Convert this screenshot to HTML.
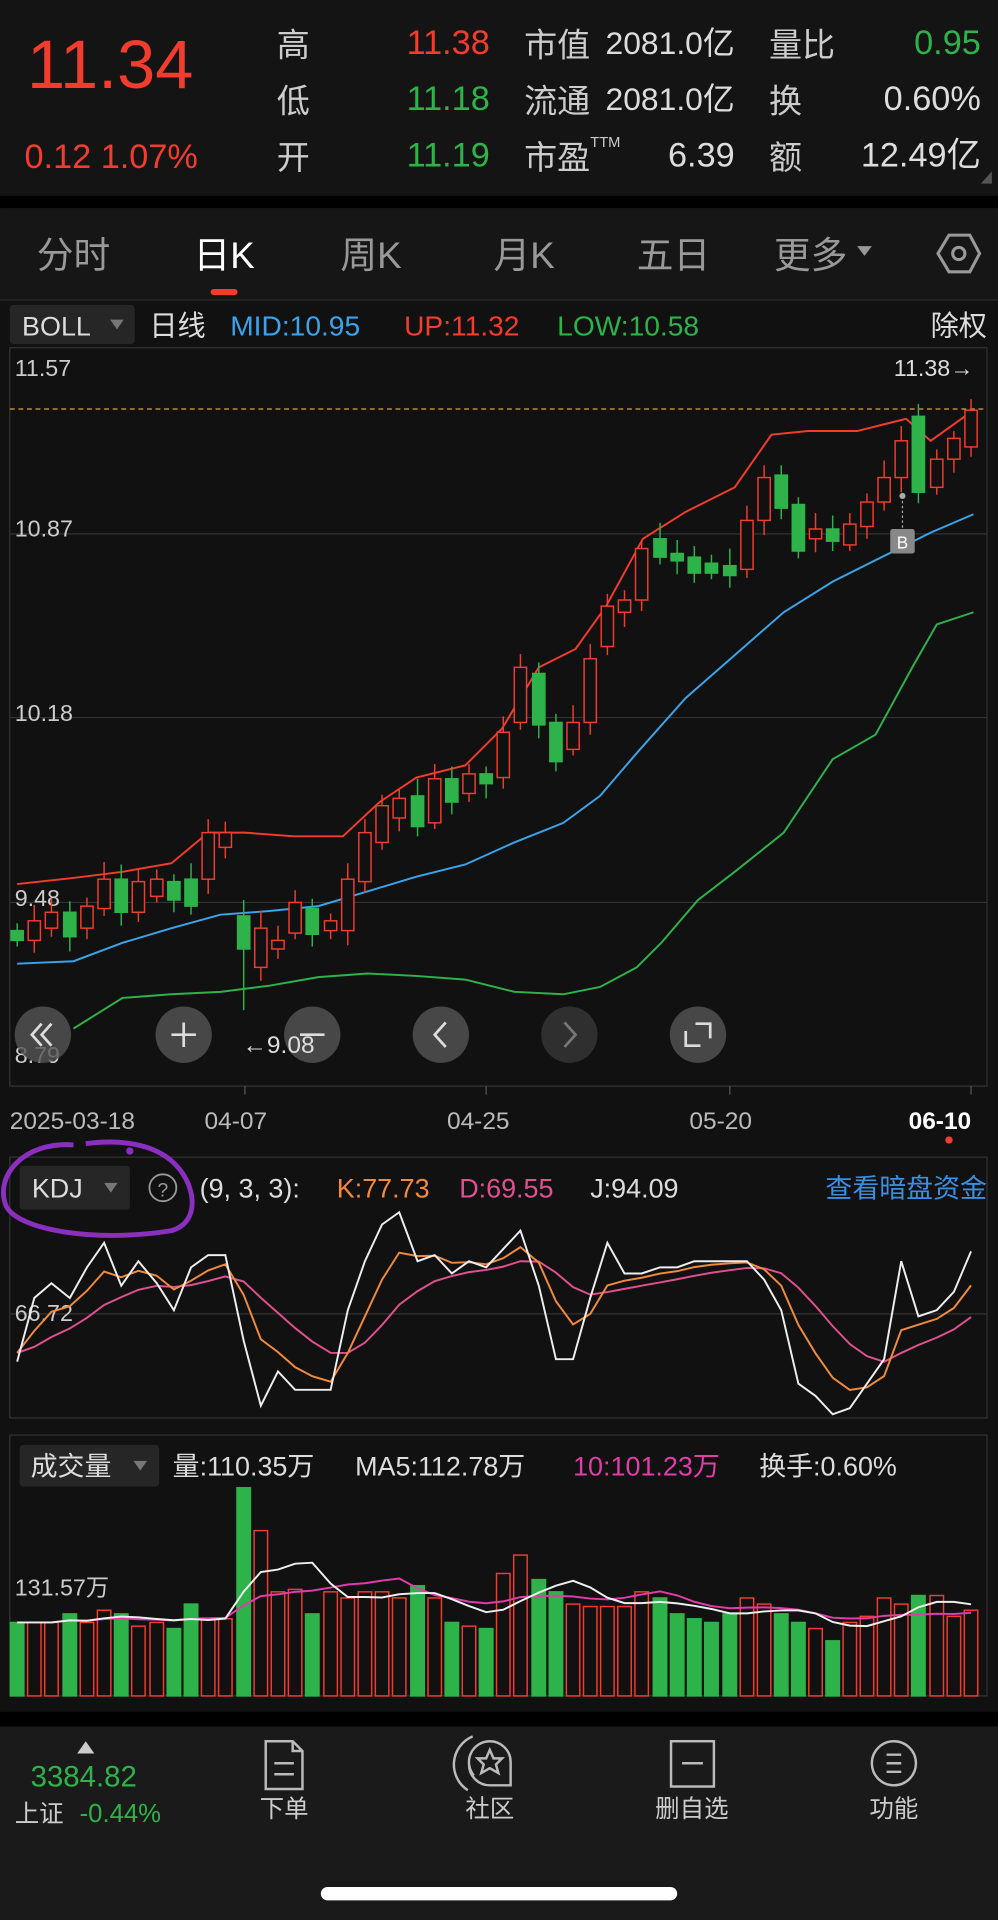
<!DOCTYPE html>
<html><head><meta charset="utf-8"><style>
html,body{margin:0;padding:0;background:#111;}
svg{display:block}
text{font-family:"Liberation Sans","Noto Sans CJK SC",sans-serif;}
</style></head><body>
<svg id="s" width="998" height="1920" viewBox="0 0 815 1568" xmlns="http://www.w3.org/2000/svg">
<rect width="815" height="1568" fill="#111"/>
<rect width="815" height="160" fill="#141414"/>
<rect y="160" width="815" height="10" fill="#000"/>
<rect y="170" width="815" height="75" fill="#161616"/>
<line x1="0" y1="245" x2="815" y2="245" stroke="#2a2a2a"/>
<text x="22" y="72" font-size="56" fill="#f23c2e">11.34</text>
<text x="20" y="137" font-size="28" fill="#f23c2e">0.12  1.07%</text>
<g font-size="27" fill="#ccc">
<text x="226" y="46">高</text><text x="226" y="92">低</text><text x="226" y="138">开</text>
<text x="428" y="46">市值</text><text x="428" y="92">流通</text><text x="428" y="138">市盈</text>
<text x="482" y="120" font-size="12">TTM</text>
<text x="628" y="46">量比</text><text x="628" y="92">换</text><text x="628" y="138">额</text>
</g>
<g font-size="28" text-anchor="end">
<text x="400" y="44" fill="#f23c2e">11.38</text><text x="400" y="90" fill="#2eb24a">11.18</text><text x="400" y="136" fill="#2eb24a">11.19</text>
<text x="600" y="44" fill="#ddd" font-size="26">2081.0亿</text><text x="600" y="90" fill="#ddd" font-size="26">2081.0亿</text><text x="600" y="136" fill="#ddd">6.39</text>
<text x="801" y="44" fill="#2eb24a">0.95</text><text x="801" y="90" fill="#ddd">0.60%</text><text x="801" y="136" fill="#ddd">12.49亿</text>
</g>
<path d="M801 150 L810 140 L810 150Z" fill="#555"/>
<g font-size="30" fill="#999">
<text x="30" y="219">分时</text><text x="158" y="219" fill="#fff">日K</text><text x="278" y="219">周K</text>
<text x="403" y="219">月K</text><text x="520" y="219">五日</text><text x="632" y="219">更多</text>
</g>
<path d="M700 201 L712 201 L706 209Z" fill="#999"/>
<path d="M766 207 L775 192 L792 192 L800 207 L792 222 L775 222Z" fill="none" stroke="#999" stroke-width="2.5"/>
<circle cx="783" cy="207" r="5" fill="none" stroke="#999" stroke-width="2.5"/>
<rect x="172" y="236" width="22" height="5" rx="2.5" fill="#f23c2e"/>
<rect x="8" y="249" width="102" height="32" rx="3" fill="#262626"/>
<text x="18" y="274" font-size="22" fill="#ddd">BOLL</text>
<path d="M90 261 L101 261 L95.5 269Z" fill="#777"/>
<g font-size="23">
<text x="122" y="274" fill="#ddd">日线</text>
<text x="188" y="274" fill="#3ba3ea">MID:10.95</text>
<text x="330" y="274" fill="#f23c2e">UP:11.32</text>
<text x="455" y="274" fill="#2eb24a">LOW:10.58</text>
<text x="806" y="274" fill="#ddd" text-anchor="end">除权</text>
</g>
<rect x="8" y="284" width="798" height="603" fill="none" stroke="#333"/>
<g stroke="#333"><line x1="8" y1="436" x2="806" y2="436"/><line x1="8" y1="586" x2="806" y2="586"/><line x1="8" y1="737" x2="806" y2="737"/></g>
<g font-size="19" fill="#ccc"><text x="12" y="307">11.57</text><text x="12" y="438">10.87</text><text x="12" y="589">10.18</text><text x="12" y="740">9.48</text><text x="12" y="868">8.79</text></g>
<line x1="8" y1="334" x2="806" y2="334" stroke="#d9a441" stroke-dasharray="4,3"/>
<text x="795" y="307" font-size="19" fill="#ddd" text-anchor="end">11.38→</text>
<g id="boll" fill="none" stroke-width="1.6">
<polyline stroke="#f23c2e" points="14,722 60,717 100,712 140,705 170,680 200,680 240,683 280,683 310,655 340,635 380,625 410,595 440,545 470,530 495,495 525,440 560,418 600,398 630,355 660,352 700,352 740,342 760,360 795,335"/>
<polyline stroke="#3ba3ea" points="14,787 60,785 100,770 140,758 180,747 220,744 260,740 300,728 340,716 380,706 420,688 460,672 490,650 520,615 560,570 600,535 640,500 680,475 720,455 760,435 795,420"/>
<polyline stroke="#2eb24a" points="60,840 100,815 140,812 180,810 220,805 260,798 300,795 340,797 380,800 420,810 460,812 490,806 520,790 540,770 570,735 600,712 640,680 680,620 715,600 745,545 765,510 795,500"/>
</g>
<g id="candles"></g>
<line x1="737" y1="405" x2="737" y2="432" stroke="#aaa" stroke-dasharray="2,2"/>
<circle cx="737" cy="405" r="2.5" fill="#aaa"/>
<rect x="727" y="432" width="20" height="20" rx="2" fill="#888"/>
<text x="737" y="448" font-size="14" fill="#fff" text-anchor="middle">B</text>
<g fill="rgba(85,85,85,0.8)">
<circle cx="35" cy="845" r="23"/><circle cx="150" cy="845" r="23"/><circle cx="255" cy="845" r="23"/>
<circle cx="360" cy="845" r="23"/><circle cx="465" cy="845" r="23" fill="rgba(60,60,60,0.7)"/><circle cx="570" cy="845" r="23"/>
</g>
<g stroke="#ddd" stroke-width="2.2" fill="none">
<path d="M34 836 L26 845 L34 854 M42 836 L34 845 L42 854"/>
<path d="M140 845 H160 M150 835 V855"/>
<path d="M245 845 H265"/>
<path d="M364 835 L355 845 L364 855"/>
<path d="M461 835 L470 845 L461 855" stroke="#777"/>
<path d="M560 842 V854 H572 M580 848 V836 H568"/>
</g>
<text x="198" y="860" font-size="20" fill="#ddd">←9.08</text>
<g stroke="#555"><line x1="200" y1="887" x2="200" y2="894"/><line x1="397" y1="887" x2="397" y2="894"/><line x1="596" y1="887" x2="596" y2="894"/><line x1="793" y1="887" x2="793" y2="894"/></g>
<g font-size="20" fill="#bbb"><text x="8" y="922">2025-03-18</text><text x="167" y="922">04-07</text><text x="365" y="922">04-25</text><text x="563" y="922">05-20</text><text x="742" y="922" fill="#fff" font-weight="bold">06-10</text></g>
<circle cx="775" cy="931" r="3" fill="#f23c2e"/>
<rect x="8" y="945" width="798" height="213" fill="none" stroke="#333"/>
<line x1="8" y1="1073" x2="806" y2="1073" stroke="#333"/>
<rect x="16" y="952" width="90" height="36" rx="3" fill="#262626"/>
<text x="26" y="978" font-size="22" fill="#ddd">KDJ</text>
<path d="M85 966 L96 966 L90.5 974Z" fill="#777"/>
<circle cx="133" cy="970" r="11" fill="none" stroke="#999" stroke-width="1.5"/>
<text x="133" y="977" font-size="16" fill="#999" text-anchor="middle">?</text>
<g font-size="22"><text x="163" y="978" fill="#ddd">(9, 3, 3):</text><text x="275" y="978" fill="#f28a3c">K:77.73</text><text x="375" y="978" fill="#e0508f">D:69.55</text><text x="482" y="978" fill="#ddd">J:94.09</text><text x="806" y="978" fill="#3b8fe0" text-anchor="end">查看暗盘资金</text></g>
<text x="12" y="1079" font-size="19" fill="#ccc">66.72</text>
<g id="kdj" fill="none" stroke-width="1.6"></g>
<path d="M60 935 C20 932 -5 960 5 985 C15 1005 80 1015 140 1005 C165 998 160 965 140 948 C125 935 100 930 70 934" fill="none" stroke="#8a2fc0" stroke-width="4"/>
<circle cx="106" cy="940" r="3" fill="#8a2fc0"/>
<rect x="8" y="1172" width="798" height="213" fill="none" stroke="#333"/>
<rect x="16" y="1180" width="114" height="34" rx="3" fill="#262626"/>
<text x="25" y="1205" font-size="22" fill="#ddd">成交量</text>
<path d="M109 1193 L120 1193 L114.5 1201Z" fill="#777"/>
<g font-size="22"><text x="141" y="1205" fill="#ddd">量:110.35万</text><text x="290" y="1205" fill="#ddd">MA5:112.78万</text><text x="468" y="1205" fill="#e03caa">10:101.23万</text><text x="620" y="1205" fill="#ddd">换手:0.60%</text></g>
<g id="vol"></g>
<text x="12" y="1303" font-size="19" fill="#ccc">131.57万</text>
<rect y="1398" width="815" height="12" fill="#000"/>
<rect y="1410" width="815" height="158" fill="#1a1a1a"/>
<path d="M63 1432 L77 1432 L70 1422Z" fill="#ccc"/>
<text x="25" y="1459" font-size="24" fill="#2eb24a">3384.82</text>
<text x="12" y="1488" font-size="20" fill="#ccc">上证</text>
<text x="65" y="1488" font-size="21" fill="#2eb24a">-0.44%</text>
<g stroke="#bbb" stroke-width="2" fill="none">
<path d="M217 1422 H239 L247 1430 V1461 H217Z M239 1422 V1430 H247 M224 1440 H240 M224 1449 H240"/>
<path d="M387 1450 A17 17 0 0 1 400 1422 A17 17 0 0 1 417 1439 V1458 H400 A17 17 0 0 1 383 1441"/>
<path d="M400 1429 L403 1436 L410 1436 L405 1441 L407 1448 L400 1444 L393 1448 L395 1441 L390 1436 L397 1436Z"/>
<path d="M382 1462 A25 25 0 0 1 386 1418"/>
<rect x="548" y="1422" width="35" height="37"/><path d="M557 1440 H574"/>
<circle cx="730" cy="1440" r="18"/><path d="M724 1433 H736 M724 1440 H736 M724 1447 H736"/>
</g>
<g font-size="20" fill="#ccc" text-anchor="middle"><text x="232" y="1484">下单</text><text x="400" y="1484">社区</text><text x="565" y="1484">删自选</text><text x="730" y="1484">功能</text></g>
<rect x="262" y="1541" width="291" height="11" rx="5.5" fill="#fff"/>
</svg>
<script>
(function(){
var NS="http://www.w3.org/2000/svg";
function el(p,t,a){var e=document.createElementNS(NS,t);for(var k in a)e.setAttribute(k,a[k]);p.appendChild(e);return e;}
var xs=[14,28,42,57,71,85,99,113,128,142,156,170,184,199,213,227,241,255,270,284,298,312,326,341,355,369,383,397,411,425,440,454,468,482,496,510,524,539,553,567,581,596,610,624,638,652,666,680,694,708,722,736,750,765,779,793];
var c=[[760,768],[768,752],[758,745],[745,765],[758,740],[742,718],[718,745],[745,720],[732,718],[720,735],[718,740],[718,680],[692,680],[748,775],[790,758],[775,768],[762,737],[742,763],[760,752],[760,718],[720,680],[688,658],[668,652],[650,675],[672,636],[636,655],[648,632],[632,640],[635,598],[590,545],[550,592],[590,622],[612,590],[590,538],[528,495],[500,490],[490,448],[440,455],[452,458],[455,468],[460,468],[462,470],[465,425],[425,390],[388,415],[412,450],[440,432],[432,442],[445,428],[430,410],[410,390],[390,360],[340,402],[398,375],[375,358],[365,335]];
var R="#f23c2e",G="#2eb24a",cg=document.getElementById("candles"),cols=[];
for(var i=0;i<xs.length;i++){var o=c[i][0],cl=c[i][1],up=cl<=o,col=up?R:G;cols.push(col);
var bt=Math.min(o,cl),bb=Math.max(o,cl),hi=bt-6-(i*7%9),lo=bb+5+(i*5%8);if(i==13){hi=735;lo=825;}if(i==55)hi=326;
el(cg,"line",{x1:xs[i],x2:xs[i],y1:hi,y2:lo,stroke:col,"stroke-width":1.2});
el(cg,"rect",{x:xs[i]-5,y:bt,width:10,height:Math.max(bb-bt,1.5),fill:up?"#111":col,stroke:col,"stroke-width":1.2});}
var J=[1112,1060,1048,1060,1035,1015,1050,1030,1048,1070,1035,1025,1025,1095,1148,1120,1135,1135,1135,1070,1030,1000,990,1030,1025,1040,1030,1035,1020,1005,1050,1110,1110,1060,1015,1040,1040,1035,1035,1030,1030,1030,1030,1045,1070,1130,1140,1155,1150,1130,1110,1030,1075,1070,1055,1022];
var K=[],D=[],k=1100,d=1105;for(i=0;i<J.length;i++){k=k*0.6+J[i]*0.4;d=d*0.72+k*0.28;K.push(k);D.push(d);}
var kg=document.getElementById("kdj");
function pl(arr,col){el(kg,"polyline",{points:arr.map(function(v,i){return xs[i]+","+v.toFixed(1)}).join(" "),stroke:col});}
pl(D,"#e0508f");pl(K,"#f28a3c");pl(J,"#eee");
var V=[1325,1325,1325,1318,1325,1315,1318,1328,1325,1330,1310,1322,1322,1215,1250,1300,1298,1318,1300,1305,1300,1300,1305,1295,1305,1325,1328,1330,1285,1270,1290,1300,1310,1312,1312,1312,1300,1305,1318,1322,1325,1318,1305,1310,1318,1325,1330,1340,1325,1320,1305,1310,1303,1303,1320,1315];
var vg=document.getElementById("vol");
for(i=0;i<xs.length;i++){var r=cols[i]==R;el(vg,"rect",{x:xs[i]-5.5,y:V[i],width:11,height:1385-V[i],fill:r?"#111":G,stroke:r?R:G,"stroke-width":1.2});}
function ma(n){var out=[];for(var i=0;i<V.length;i++){var s=0,m=0;for(var j=Math.max(0,i-n+1);j<=i;j++){s+=1385-V[j];m++;}out.push(1385-s/m);}return out;}
var m5=ma(5),m10=ma(10);
el(vg,"polyline",{points:m10.map(function(v,i){return xs[i]+","+v.toFixed(1)}).join(" "),stroke:"#e03caa",fill:"none","stroke-width":1.6});
el(vg,"polyline",{points:m5.map(function(v,i){return xs[i]+","+v.toFixed(1)}).join(" "),stroke:"#eee",fill:"none","stroke-width":1.6});
})();
</script>
</body></html>
